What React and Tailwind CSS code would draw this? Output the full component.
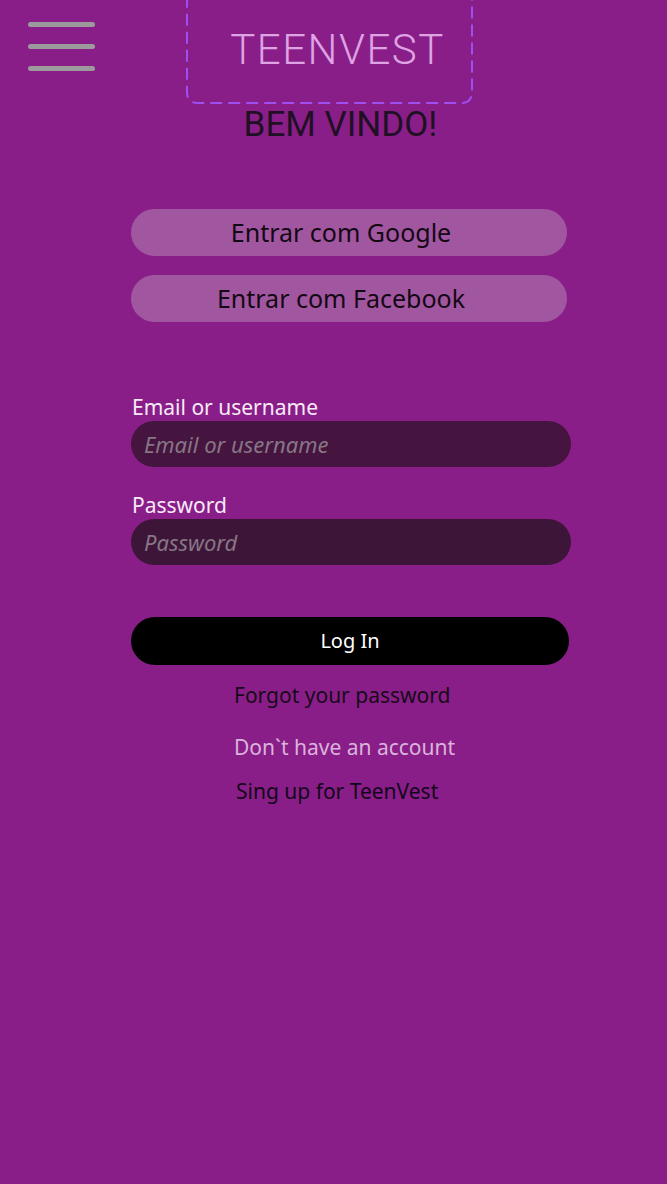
import React from "react";

export default function App() {
  const body = { fontFamily: '"Noto Sans", "DejaVu Sans", sans-serif' };
  const logo = { fontFamily: 'Roboto, "Liberation Sans", sans-serif' };
  return (
    <div className="relative h-[1184px] w-full overflow-hidden bg-[#8a1e88]" style={body}>
      <div className="flex items-start">
        <button className="ml-[28px] mt-[22px] flex w-[67px] flex-col gap-[17px]" aria-label="menu">
          <span className="block h-[5px] w-full rounded-full bg-[#9c9a9c]"></span>
          <span className="block h-[5px] w-full rounded-full bg-[#9c9a9c]"></span>
          <span className="block h-[5px] w-full rounded-full bg-[#9c9a9c]"></span>
        </button>
        <div className="relative -mt-[12px] ml-[91px] flex h-[116px] w-[287px] items-center justify-center pl-[16px] pt-[8px]">
          <svg className="absolute inset-0" width="287" height="116" viewBox="0 0 287 116">
            <rect x="1" y="1" width="285" height="114" rx="10" ry="10" fill="none" stroke="#9d4ff0" strokeWidth="2" strokeDasharray="12 6" />
          </svg>
          <span className="relative text-[42px] font-light leading-none tracking-[1.5px] text-[#dda3e3]" style={logo}>TEENVEST</span>
        </div>
      </div>
      <div className="mt-[1px] flex justify-center pl-[14px]">
        <h1 className="text-[35px] leading-[40px] text-[#1f1024]" style={logo}>BEM VINDO!</h1>
      </div>

      <div className="ml-[131px] mt-[64px] flex w-[436px] flex-col gap-[19px]">
        <button className="h-[47px] w-full rounded-full bg-[#a156a0] pr-[16px] text-[25px] leading-none text-[#140814]">Entrar com Google</button>
        <button className="h-[47px] w-full rounded-full bg-[#a156a0] pr-[16px] text-[25px] leading-none text-[#140814]">Entrar com Facebook</button>
      </div>

      <div className="ml-[131px] mt-[72px] flex w-[440px] flex-col">
        <label className="pl-[1px] text-[21px] leading-[26px] text-[#f8ebf8]">Email or username</label>
        <input
          className="mt-[1px] h-[46px] w-full rounded-full bg-[#45143f] px-[13px] text-[22px] italic text-[#e8d8e8] outline-none placeholder:text-[#877686]"
          placeholder="Email or username"
        />
        <label className="mt-[25px] pl-[1px] text-[21px] leading-[26px] text-[#f8ebf8]">Password</label>
        <input
          type="password"
          className="mt-[1px] h-[46px] w-full rounded-full bg-[#3d1539] px-[13px] text-[22px] italic text-[#e8d8e8] outline-none placeholder:text-[#877686]"
          placeholder="Password"
        />
      </div>

      <div className="ml-[131px] mt-[52px] w-[438px]">
        <button className="h-[48px] w-full rounded-full bg-black text-[20px] leading-none text-white">Log In</button>
      </div>

      <div className="ml-[234px] mt-[16px] flex flex-col items-start">
        <a className="text-[21px] leading-[28px] text-[#170a1a]">Forgot your password</a>
        <p className="mt-[24px] text-[21px] leading-[28px] text-[#dab3dc]">Don`t have an account</p>
        <a className="ml-[2px] mt-[16px] text-[21px] leading-[28px] text-[#12071a]">Sing up for TeenVest</a>
      </div>
    </div>
  );
}
